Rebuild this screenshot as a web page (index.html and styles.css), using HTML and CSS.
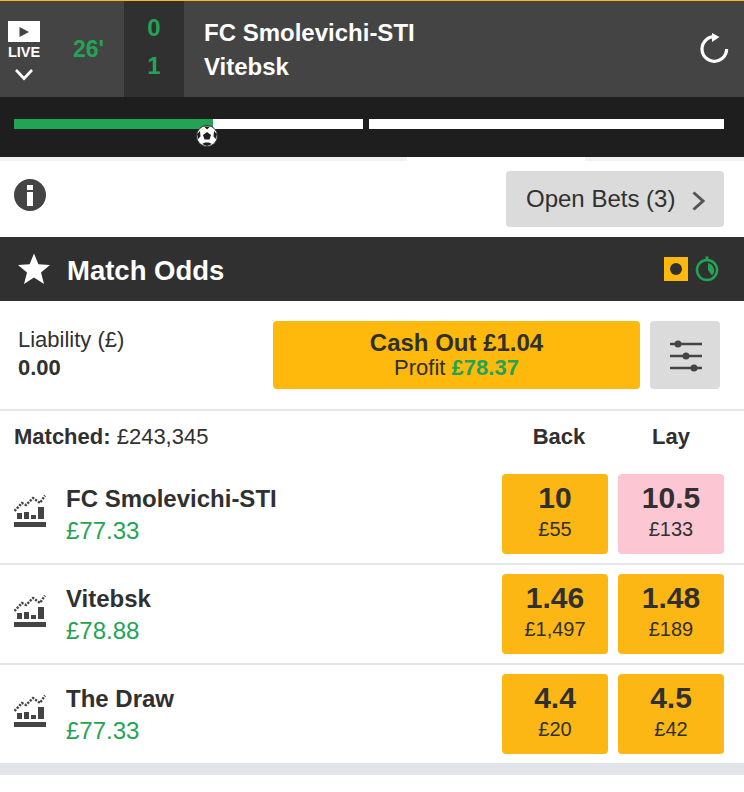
FILE: index.html
```html
<!DOCTYPE html>
<html lang="en">
<head>
    <meta charset="UTF-8">
    <title>Match Odds</title>
    <link rel="stylesheet" href="styles.css">
</head>
<body>
    <!-- Match header -->
    <header class="match-header">
        <div class="live-box">
            <div class="live-video">
                <svg width="10" height="10" viewBox="0 0 10 10"><path d="M0.5 0 L10 5 L0.5 10 Z" fill="#444"/></svg>
            </div>
            <span class="live-label">LIVE</span>
            <svg class="live-chevron" width="18" height="12" viewBox="0 0 18 12"><path d="M1 1 L9 9.5 L17 1" fill="none" stroke="#fff" stroke-width="2.6"/></svg>
        </div>
        <div class="match-time">26'</div>
        <div class="score">
            <span>0</span>
            <span>1</span>
        </div>
        <div class="teams">
            <span>FC Smolevichi-STI</span>
            <span>Vitebsk</span>
        </div>
        <svg class="refresh" width="30" height="32" viewBox="0 0 30 32">
            <path d="M15.3 4.7 A12.3 12.3 0 1 0 27.6 17" fill="none" stroke="#fff" stroke-width="3.2"/>
            <path d="M13 1 L20.5 5 L13 10 Z" fill="#fff"/>
        </svg>
    </header>

    <!-- Match timeline -->
    <div class="timeline">
        <div class="half half-first">
            <div class="half-fill"></div>
            <svg class="ball" width="22" height="22" viewBox="0 0 22 22">
                <circle cx="11" cy="11" r="10.5" fill="#fff" stroke="#333" stroke-width="1"/>
                <path d="M11 7 L15 10 L13.5 14.5 L8.5 14.5 L7 10 Z" fill="#1e1e1e"/>
                <path d="M8 1.5 L14 1.5 L11 4.5 Z M1 9 L4 6 L4.5 11.5 L2 14 Z M21 9 L18 6 L17.5 11.5 L20 14 Z M6 19 L9 17.5 L13 17.5 L16 19 L11 21 Z" fill="#1e1e1e"/>
            </svg>
        </div>
        <div class="half half-second"></div>
    </div>
    <div class="timeline-edge">
        <div class="edge-left"></div>
        <div class="edge-right"></div>
    </div>

    <!-- Info and open bets -->
    <div class="toolbar">
        <svg class="info" width="32" height="32" viewBox="0 0 32 32">
            <circle cx="16" cy="16" r="16" fill="#444"/>
            <rect x="13" y="6" width="6" height="5" fill="#fff"/>
            <rect x="13" y="13" width="6" height="14" fill="#fff"/>
        </svg>
        <button class="open-bets">
            Open Bets (3)
            <svg class="open-bets-arrow" width="13" height="20" viewBox="0 0 13 20"><path d="M1.5 1.5 L11 10 L1.5 18.5" fill="none" stroke="#555" stroke-width="3"/></svg>
        </button>
    </div>

    <!-- Market title -->
    <div class="market-title">
        <svg class="star" width="32" height="32" viewBox="0 0 32 32"><path d="M16 0.5 L20.4 11.2 L32 12 L23 19.4 L26 31 L16 24.6 L6 31 L9 19.4 L0 12 L11.6 11.2 Z" fill="#fff"/></svg>
        <h1>Match Odds</h1>
        <div class="inplay-icon"><span></span></div>
        <svg class="clock" width="24" height="26" viewBox="0 0 24 26">
            <rect x="10.5" y="0.5" width="3" height="3" fill="#23a455"/>
            <circle cx="12" cy="14" r="10" fill="none" stroke="#23a455" stroke-width="2.5"/>
            <path d="M13 7 A7.5 7.5 0 0 1 17 19.5 L13 14 Z" fill="#23a455"/>
        </svg>
    </div>

    <!-- Cash out -->
    <div class="cash-row">
        <div class="liability">
            <span>Liability (£)</span>
            <strong>0.00</strong>
        </div>
        <button class="cash-out">
            <strong>Cash Out £1.04</strong>
            <span>Profit <b>£78.37</b></span>
        </button>
        <button class="settings">
            <svg width="32" height="34" viewBox="0 0 32 34">
                <path d="M0 6 H32 M0 18 H32 M0 30 H32" stroke="#444" stroke-width="2.5"/>
                <circle cx="8" cy="6" r="3.5" fill="#444"/>
                <circle cx="16" cy="18" r="3.5" fill="#444"/>
                <circle cx="24" cy="30" r="3.5" fill="#444"/>
            </svg>
        </button>
    </div>

    <!-- Runners -->
    <div class="runners-head">
        <div class="matched"><b>Matched:</b> £243,345</div>
        <div class="col-title col-back">Back</div>
        <div class="col-title">Lay</div>
    </div>

    <div class="runner">
        <svg class="chart" width="32" height="32" viewBox="0 0 32 32"><use href="#chartIcon"/></svg>
        <div class="runner-info">
            <span class="runner-name">FC Smolevichi-STI</span>
            <span class="runner-pnl">£77.33</span>
        </div>
        <div class="price"><b>10</b><span>£55</span></div>
        <div class="price price-lay"><b>10.5</b><span>£133</span></div>
    </div>
    <div class="runner">
        <svg class="chart" width="32" height="32" viewBox="0 0 32 32"><use href="#chartIcon"/></svg>
        <div class="runner-info">
            <span class="runner-name">Vitebsk</span>
            <span class="runner-pnl">£78.88</span>
        </div>
        <div class="price"><b>1.46</b><span>£1,497</span></div>
        <div class="price"><b>1.48</b><span>£189</span></div>
    </div>
    <div class="runner">
        <svg class="chart" width="32" height="32" viewBox="0 0 32 32"><use href="#chartIcon"/></svg>
        <div class="runner-info">
            <span class="runner-name">The Draw</span>
            <span class="runner-pnl">£77.33</span>
        </div>
        <div class="price"><b>4.4</b><span>£20</span></div>
        <div class="price"><b>4.5</b><span>£42</span></div>
    </div>

    <div class="footer-band"></div>

    <svg width="0" height="0" class="defs">
        <defs>
            <g id="chartIcon" fill="#444">
                <path d="M0.5 16 L8 8 L12 10 L19 3 L26 8 L31 0.5" fill="none" stroke="#444" stroke-width="2.4" stroke-dasharray="2.2 1.3"/>
                <rect x="3" y="18" width="5" height="6"/>
                <rect x="10" y="17" width="5" height="7"/>
                <rect x="17" y="20" width="5" height="4"/>
                <rect x="24" y="12" width="6" height="12"/>
                <rect x="0" y="27" width="32" height="5"/>
            </g>
        </defs>
    </svg>
</body>
</html>
```

FILE: styles.css
```css
* {
    box-sizing: border-box;
}

body {
    margin: 0;
    font-family: "Liberation Sans", Arial, sans-serif;
    background-color: #ffffff;
    color: #303030;
}

button {
    font-family: inherit;
    border: none;
    color: inherit;
    padding: 0;
}

.defs {
    display: block;
}

/* Match header */
.match-header {
    height: 97px;
    display: flex;
    background-color: #444444;
    border-top: 1px solid #ffb80c;
    color: #ffffff;
}

.live-box {
    width: 48px;
    padding-top: 20px;
    display: flex;
    flex-direction: column;
    align-items: center;
}

.live-video {
    width: 32px;
    height: 21px;
    background-color: #ffffff;
    display: flex;
    align-items: center;
    justify-content: center;
}

.live-label {
    font-size: 14.5px;
    font-weight: bold;
    line-height: 16px;
    margin-top: 2px;
}

.live-chevron {
    margin-top: 9px;
}

.match-time {
    width: 76px;
    padding: 36px 0 0 25px;
    font-size: 23px;
    font-weight: bold;
    line-height: 24px;
    color: #23a455;
}

.score {
    width: 60px;
    background-color: #303030;
    color: #23a455;
    font-size: 24px;
    font-weight: bold;
    line-height: 38px;
    text-align: center;
    padding-top: 8px;
    display: flex;
    flex-direction: column;
}

.teams {
    flex: 1;
    padding: 15px 0 0 20px;
    font-size: 24px;
    font-weight: bold;
    line-height: 34px;
    display: flex;
    flex-direction: column;
}

.refresh {
    margin: 31px 15px 0 0;
}

/* Timeline */
.timeline {
    height: 60px;
    background-color: #1e1e1e;
    padding: 22px 20px 0 14px;
    display: flex;
    gap: 6px;
}

.half {
    height: 10px;
    background-color: #ffffff;
}

.half-first {
    width: 349px;
    position: relative;
}

.half-second {
    flex: 1;
}

.half-fill {
    width: 199px;
    height: 10px;
    background-color: #23a455;
}

.ball {
    position: absolute;
    left: 182px;
    top: 6px;
}

.timeline-edge {
    height: 4px;
    display: flex;
    justify-content: space-between;
}

.edge-left {
    width: 407px;
    background-color: #f2f2f2;
}

.edge-right {
    width: 159px;
    background-color: #f2f2f2;
}

/* Toolbar */
.toolbar {
    height: 76px;
    display: flex;
    justify-content: space-between;
    padding: 10px 20px 0 14px;
}

.info {
    margin-top: 8px;
}

.open-bets {
    width: 218px;
    height: 56px;
    border-radius: 4px;
    background-color: #dbdbdb;
    font-size: 24px;
    display: flex;
    align-items: center;
    gap: 17px;
    padding-left: 20px;
}

.open-bets-arrow {
    margin-top: 4px;
}

/* Market title */
.market-title {
    height: 64px;
    background-color: #303030;
    color: #ffffff;
    display: flex;
    align-items: center;
    padding: 0 25px 0 18px;
}

.market-title h1 {
    flex: 1;
    margin: 3px 0 0 17px;
    font-size: 27.5px;
    font-weight: bold;
}

.inplay-icon {
    width: 24px;
    height: 24px;
    background-color: #ffb80c;
    display: flex;
    align-items: center;
    justify-content: center;
    margin-right: 7px;
}

.inplay-icon span {
    width: 12px;
    height: 12px;
    border-radius: 50%;
    background-color: #303030;
}

/* Cash out */
.cash-row {
    height: 110px;
    padding: 20px 24px 0 18px;
    display: flex;
    border-bottom: 2px solid #e3e6ea;
}

.liability {
    width: 255px;
    display: flex;
    flex-direction: column;
    font-size: 22px;
    line-height: 28px;
    padding-top: 5px;
}

.cash-out {
    width: 367px;
    height: 68px;
    border-radius: 4px;
    background-color: #ffb80c;
    display: flex;
    flex-direction: column;
    align-items: center;
    justify-content: center;
    font-size: 22px;
    line-height: 24px;
}

.cash-out strong {
    font-size: 24px;
    line-height: 26px;
}

.cash-out b {
    color: #23a455;
}

.settings {
    width: 70px;
    height: 68px;
    margin-left: 10px;
    border-radius: 4px;
    background-color: #dbdbdb;
    display: flex;
    align-items: center;
    justify-content: center;
    padding-left: 2px;
}

/* Runners */
.runners-head {
    height: 53px;
    padding: 0 20px 2px 14px;
    display: flex;
    align-items: center;
    font-size: 22px;
}

.matched {
    flex: 1;
}

.col-title {
    width: 106px;
    margin-left: 10px;
    text-align: center;
    font-weight: bold;
}

.col-back {
    padding-left: 8px;
}

.runner {
    height: 100px;
    padding: 10px 20px 0 14px;
    display: flex;
}

.runner + .runner {
    height: 101px;
    margin-top: -1px;
    padding-top: 9px;
    border-top: 2px solid #e3e6ea;
}

.chart {
    margin-top: 21px;
}

.runner-info {
    flex: 1;
    padding: 9px 0 0 20px;
    display: flex;
    flex-direction: column;
}

.runner-name {
    font-size: 24px;
    font-weight: bold;
    line-height: 32px;
}

.runner-pnl {
    font-size: 24px;
    line-height: 32px;
    color: #23a455;
}

.price {
    width: 106px;
    height: 80px;
    margin-left: 10px;
    border-radius: 4px;
    background-color: #fcb714;
    display: flex;
    flex-direction: column;
    align-items: center;
    padding-top: 7px;
}

.price-lay {
    background-color: #fcc7d2;
}

.price b {
    font-size: 30px;
    line-height: 34px;
}

.price span {
    font-size: 20px;
    line-height: 28px;
}

.footer-band {
    height: 12px;
    margin-top: -1px;
    background-color: #e1e4e9;
}
```
